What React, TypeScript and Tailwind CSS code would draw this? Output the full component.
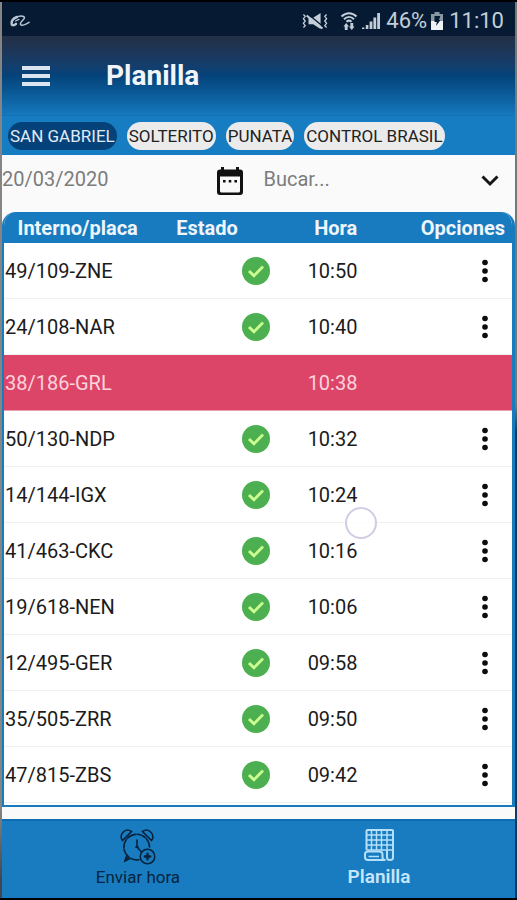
// ---------------- Types ----------------
interface Trip {
    plate: string;
    hour: string;
    late?: boolean;
    touched?: boolean;
}

// ---------------- Data ----------------
const routes = ['SAN GABRIEL', 'SOLTERITO', 'PUNATA', 'CONTROL BRASIL'];

const trips: Trip[] = [
    { plate: '49/109-ZNE', hour: '10:50' },
    { plate: '24/108-NAR', hour: '10:40' },
    { plate: '38/186-GRL', hour: '10:38', late: true },
    { plate: '50/130-NDP', hour: '10:32' },
    { plate: '14/144-IGX', hour: '10:24', touched: true },
    { plate: '41/463-CKC', hour: '10:16' },
    { plate: '19/618-NEN', hour: '10:06' },
    { plate: '12/495-GER', hour: '09:58' },
    { plate: '35/505-ZRR', hour: '09:50' },
    { plate: '47/815-ZBS', hour: '09:42' },
];

// ---------------- Icons ----------------
const CarrierIcon = () => (
    <svg className="w-5 h-3" viewBox="0 0 20 12" fill="none" stroke="#b9c6d4" strokeLinecap="round">
        <path strokeWidth="2.4" d="M7 2C4 3 1.600 5.500 1.600 8.400c0 2.400 2.600 2.200 4.400.4" />
        <path strokeWidth="1.500" d="M5 3.200C8 .6 14.600.2 14.400 3c-.2 2-4 3.400-4 5.800 0 2.600 4.600 1.400 8.600-1.400" />
        <path strokeWidth="1.200" d="M5.500 6l3.500-1.600" />
    </svg>
);

const MuteIcon = () => (
    <svg className="w-[26px] h-5" viewBox="0 0 28 20" fill="none">
        <path fill="#c3ced9" d="M7 6.500h5L20 1.500v17l-8-5H7z" />
        <path stroke="#061b33" strokeWidth="1.600" d="M6 2.200l17 14" />
        <path stroke="#c3ced9" strokeWidth="2.200" d="M5 4l17 14" />
        <path stroke="#c3ced9" strokeWidth="1.400" d="M1.500 3l2 2-2 2.500 2 2.500-2 2.500 2 2.500-2 2M26.500 3l-2 2 2 2.500-2 2.500 2 2.500-2 2.500 2 2" />
    </svg>
);

const WifiIcon = () => (
    <svg className="w-[18px] h-5" viewBox="0 0 18 20" fill="none">
        <path stroke="#c3ced9" strokeWidth="2" d="M1.500 5.500c4.500-4.500 10.500-4.500 15 0M4 8.200c3-3 7-3 10 0M6.500 10.800c1.600-1.500 3.400-1.500 5 0" />
        <path fill="#c3ced9" d="M3.500 15.500L6.200 12 9 15.500H7.600V19H4.800v-3.500zM9 15.500h1.400V12h2.800v3.500h1.300L11.800 19z" />
    </svg>
);

const SignalIcon = () => (
    <svg className="w-[18px] h-5" viewBox="0 0 18 20" fill="#c3ced9">
        <path d="M0 16.500h2.400V18H0zM3.800 14h2.600v4H3.800zM7.600 10.500h2.800V18H7.600zM11.400 6.500h2.800V18h-2.800zM15.200 2H18v16h-2.800z" />
    </svg>
);

const BatteryIcon = () => (
    <svg className="w-3 h-[18px]" viewBox="0 0 12 18">
        <path fill="#8996a3" d="M3.500 0h5v2H12v7H0V2h3.500z" />
        <path fill="#eef2f5" d="M0 9h12v9H0z" />
        <path fill="#061b33" d="M3.500 4h5.800L8 8h1.500L5 14l.8-4H3.500z" />
    </svg>
);

const CalendarIcon = () => (
    <svg className="w-[26px] h-7" viewBox="0 0 26 28">
        <path
            fill="#111"
            fillRule="evenodd"
            d="M4 0h3v2.500h12V0h3v2.500h1a3 3 0 013 3V25a3 3 0 01-3 3H3a3 3 0 01-3-3V5.500a3 3 0 013-3h1zM3 9.500V24q0 1.500 1.500 1.500h17q1.500 0 1.500-1.500V9.500z"
        />
        <path fill="#111" d="M6 13h2.600v2.600H6zM11.700 13h2.600v2.600h-2.600zM17.400 13H20v2.600h-2.600z" />
    </svg>
);

const CheckIcon = () => (
    <svg className="w-7 h-7 block" viewBox="0 0 28 28" role="img" aria-label="OK">
        <circle cx="14" cy="14" r="14" fill="#4caf50" />
        <path d="M7 14l4.900 4.800L21 9.500" fill="none" stroke="#ccff90" strokeWidth="2.800" />
    </svg>
);

const DotsIcon = () => (
    <svg className="w-2 h-6 block" viewBox="0 0 8 24" fill="#0c0c0c">
        <circle cx="4" cy="3.500" r="2.800" />
        <circle cx="4" cy="12" r="2.800" />
        <circle cx="4" cy="20.500" r="2.800" />
    </svg>
);

const AlarmIcon = () => (
    <svg className="w-9 h-9" viewBox="0 0 36 36" fill="none" stroke="#06243d" strokeWidth="1.600" strokeLinecap="round">
        <path d="M2.500 11.500C-1.500 6 5-2 11.500 2.500zM31.500 11.500C35.500 6 29-2 22.500 2.500z" />
        <path d="M29.500 18A12.800 12.800 0 1 0 19.500 30.600" strokeDasharray="9 1.600" />
        <path d="M7 27.500L5 32M17 11v7l4.500 5" />
        <path fill="#06243d" d="M15.800 18h2.400M6 28.500l3 1.500-4 2z" />
        <circle cx="27.500" cy="27.500" r="7.300" />
        <path strokeWidth="2.400" d="M27.500 24.800v5.400M24.800 27.500h5.400" />
    </svg>
);

const SheetIcon = () => (
    <svg className="w-[30px] h-8" viewBox="0 0 30 32" fill="none" stroke="#b5e0fa" strokeWidth="1.500">
        <path strokeWidth="2" d="M2.500 21V2Q2.500 1 3.500 1H28q1 0 1 1v26.500q0 2.500-3 2.500t-3-2.500V22" />
        <path d="M2.500 6H29M2.500 11H29M2.500 16H29M2.500 21H29M7.500 1v20M12.500 1v20M17.500 1v20M23 1v21" />
        <path fill="#197cc1" strokeWidth="2" d="M4 22.500H15.500q3 0 3 3v3q0 2.500 3 2.500H4q-3 0-3-3v-2.500q0-3 3-3z" />
        <path d="M4.500 27.500H15" />
    </svg>
);

// ---------------- Component ----------------
const App = () => {
    return (
        <div className="min-h-screen flex flex-col bg-black font-[Roboto,sans-serif] py-[2px]">
            <div className="flex-1 flex">
                <div className="w-[2px] bg-linear-to-b from-[#858585] from-90% to-[#3f4650] to-98%" />

                <div className="flex-1 min-w-0 flex flex-col bg-[#fafafa]">
                    {/* Status bar */}
                    <div className="h-[34px] flex items-center justify-between pl-2 pt-1 pr-[11px] bg-[#061b33] text-[#c3ced9]">
                        <CarrierIcon />
                        <div className="flex items-center gap-1 text-[22px] leading-6">
                            <MuteIcon />
                            <span className="w-1" />
                            <WifiIcon />
                            <SignalIcon />
                            <span className="pl-[2px]">46%</span>
                            <BatteryIcon />
                            <span className="pl-[2px]">11:10</span>
                        </div>
                    </div>

                    {/* Header */}
                    <header className="h-[79px] flex items-center gap-14 pl-5 bg-linear-to-b from-[#232f44] via-[#04437a] via-50% to-[#1678bd]">
                        <button type="button" aria-label="Menu">
                            <svg className="w-7 h-5 block" viewBox="0 0 28 20" fill="#dbe5ef">
                                <path d="M0 0h28v4H0zM0 8h28v4H0zM0 16h28v4H0z" />
                            </svg>
                        </button>
                        <h1 className="text-[28px] leading-8 font-bold text-[#f1f5fa]">Planilla</h1>
                    </header>

                    {/* Routes */}
                    <nav className="h-10 flex items-center gap-[10px] pl-[6px] border-t border-[#1470b0] bg-[#177dc2]">
                        {routes.map((route, i) => (
                            <button
                                key={route}
                                type="button"
                                className={`h-7 rounded-full px-[2px] text-[17px] leading-7 whitespace-nowrap ${
                                    i === 0 ? 'bg-[#05427a] text-[#e0ebf5]' : 'bg-[#ebebeb] text-[#222]'
                                }`}
                            >
                                {route}
                            </button>
                        ))}
                    </nav>

                    {/* Filters */}
                    <div className="h-[57px] flex items-start pt-3 text-xl leading-6 text-[#7c7c7c]">
                        <input
                            type="text"
                            aria-label="Fecha"
                            defaultValue="20/03/2020"
                            className="w-[42%] min-w-0 bg-transparent outline-none"
                        />
                        <button type="button" aria-label="Calendario">
                            <CalendarIcon />
                        </button>
                        <div className="relative flex-1 pl-5">
                            <select aria-label="Bucar" className="w-full appearance-none bg-transparent outline-none">
                                <option>Bucar...</option>
                            </select>
                            <svg
                                className="absolute right-4 top-2 w-[18px] h-3 pointer-events-none"
                                viewBox="0 0 18 12"
                                fill="none"
                                stroke="#161616"
                                strokeWidth="3"
                            >
                                <path d="M1.500 1.500L9 9l7.500-7.500" />
                            </svg>
                        </div>
                    </div>

                    {/* Trips */}
                    <div className="border-2 border-t-0 border-r-[3px] border-[#187bbd] rounded-t-[14px] overflow-hidden bg-white pb-[2px]">
                        <table className="w-full table-fixed border-separate border-spacing-0 text-xl leading-6 text-[#1b1b1b]">
                            <thead>
                                <tr className="h-[31px] bg-[#187bbf] text-[#eef6fc]">
                                    <th className="w-[29%] p-0 font-bold">Interno/placa</th>
                                    <th className="w-[29%] p-0 pl-[25px] text-left font-bold">Estado</th>
                                    <th className="w-[15%] p-0 pr-[2px] font-bold">Hora</th>
                                    <th className="w-[27%] p-0 pr-[7px] text-right font-bold">Opciones</th>
                                </tr>
                            </thead>
                            <tbody>
                                {trips.map((trip) => (
                                    <tr
                                        key={trip.plate}
                                        className={`h-14 *:border-b ${
                                            trip.late
                                                ? 'bg-[#dd4568] text-[#fbd3dc] *:border-[#e8a0b0]'
                                                : '*:border-[#f0f0f0]'
                                        }`}
                                    >
                                        <td className="p-0 pl-px">{trip.plate}</td>
                                        <td className="p-0 pl-[91px]">{!trip.late && <CheckIcon />}</td>
                                        <td className="relative p-0 pl-[9px]">
                                            {trip.hour}
                                            {trip.touched && (
                                                <span className="absolute left-[46px] top-10 z-10 size-8 rounded-full border-2 border-[#cfcce4] bg-white/80" />
                                            )}
                                        </td>
                                        <td className="p-0 pr-[23px]">
                                            {!trip.late && (
                                                <button type="button" aria-label="Opciones" className="block ml-auto">
                                                    <DotsIcon />
                                                </button>
                                            )}
                                        </td>
                                    </tr>
                                ))}
                            </tbody>
                        </table>
                    </div>

                    {/* Bottom tabs */}
                    <nav className="mt-3 flex-1 flex border-t-2 border-[#0f6cb0] bg-[#197cc1]">
                        <a href="#enviar" className="w-[53%] flex flex-col items-center pt-2 text-[#06243d]">
                            <AlarmIcon />
                            <span className="text-[17px] leading-6">Enviar hora</span>
                        </a>
                        <a href="#planilla" className="w-[41%] flex flex-col items-center gap-1 pt-2 text-[#c5e6fb]">
                            <SheetIcon />
                            <span className="text-[19px] leading-6 font-semibold">Planilla</span>
                        </a>
                    </nav>
                </div>

                <div className="w-[2px] bg-linear-to-b from-[#777] from-45% to-[#12395a] to-48%" />
            </div>
        </div>
    );
};

export default App;
